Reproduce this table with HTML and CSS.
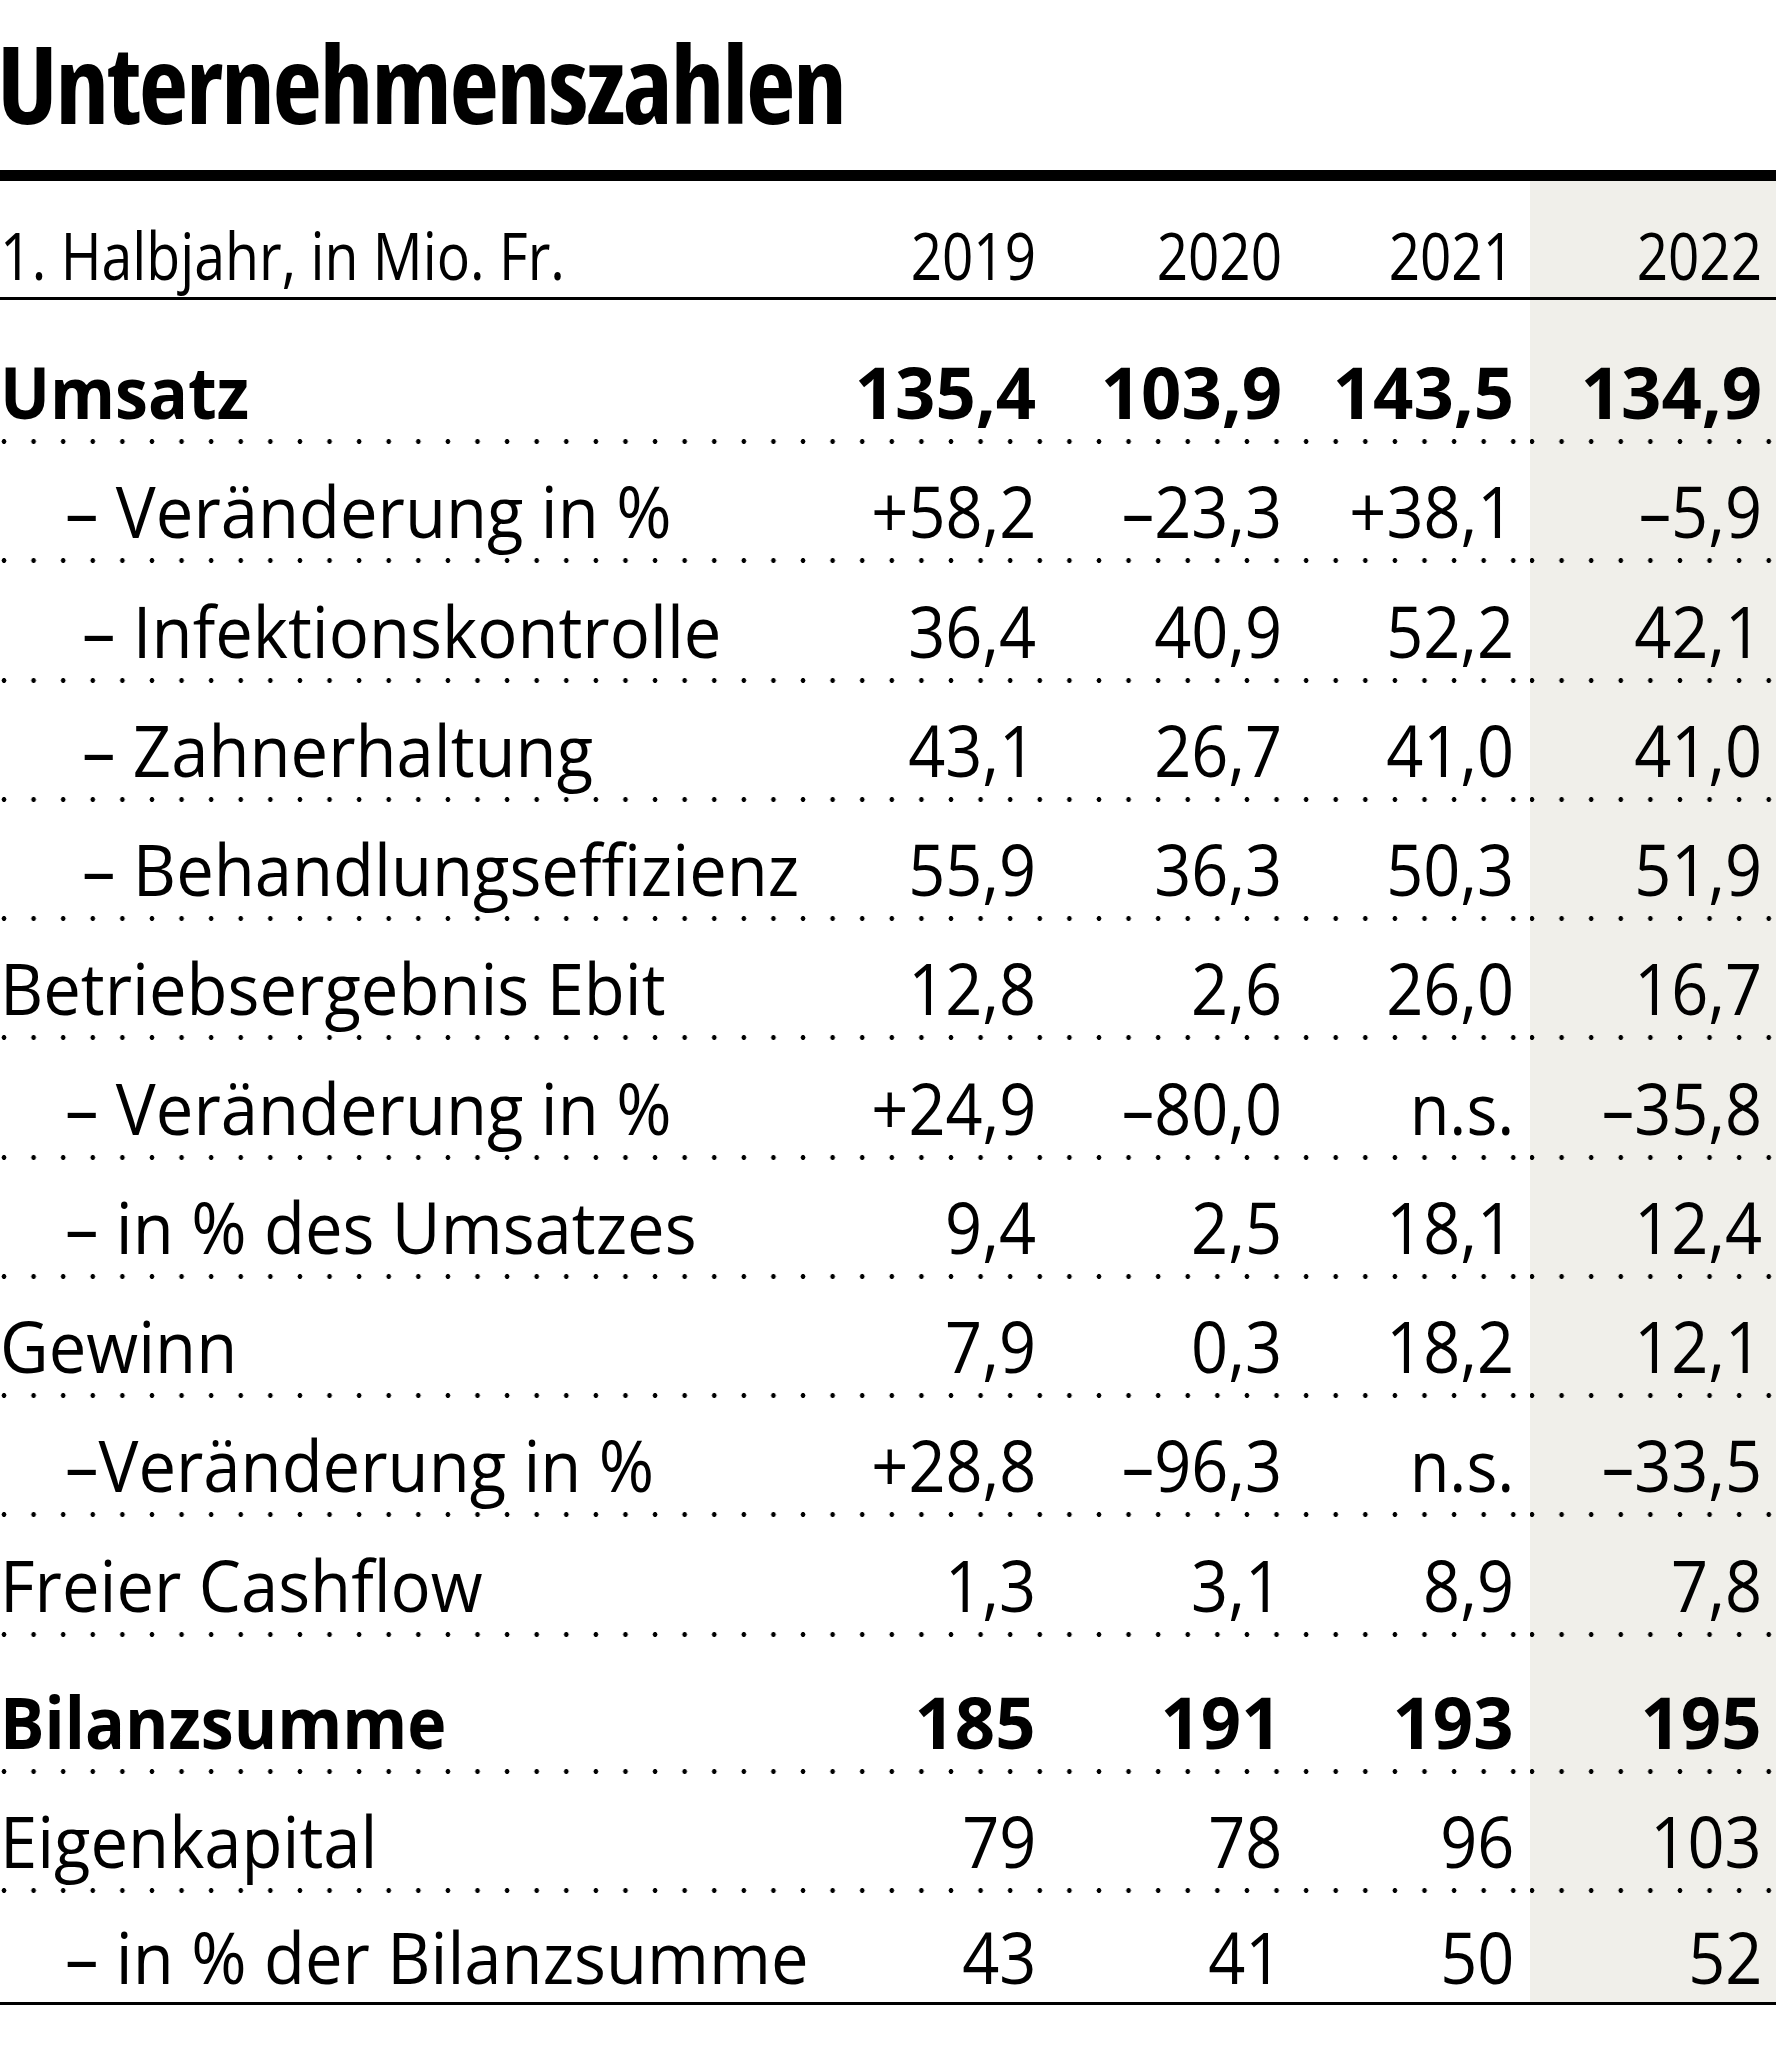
FILE: index.html
```html
<!DOCTYPE html>
<html lang="de">
<head>
<meta charset="utf-8">
<title>Unternehmenszahlen</title>
<link rel="stylesheet" href="styles.css">
</head>
<body>
<div class="sheet">
  <h1 class="title">Unternehmenszahlen</h1>
  <div class="table">
    <div class="row head">
      <div class="label"><span class="tx">1. Halbjahr, in Mio. Fr.</span></div>
      <div class="num"><span class="tx">2019</span></div>
      <div class="num"><span class="tx">2020</span></div>
      <div class="num c3"><span class="tx">2021</span></div>
      <div class="num hl"><span class="tx">2022</span></div>
    </div>
    <div class="row dots first bold">
      <div class="label"><span class="tx">Umsatz</span></div>
      <div class="num"><span class="tx">135,4</span></div>
      <div class="num"><span class="tx">103,9</span></div>
      <div class="num c3"><span class="tx">143,5</span></div>
      <div class="num hl"><span class="tx">134,9</span></div>
    </div>
    <div class="row dots">
      <div class="label ind1"><span class="tx">– Veränderung in %</span></div>
      <div class="num"><span class="tx">+58,2</span></div>
      <div class="num"><span class="tx">–23,3</span></div>
      <div class="num c3"><span class="tx">+38,1</span></div>
      <div class="num hl"><span class="tx">–5,9</span></div>
    </div>
    <div class="row dots">
      <div class="label ind2"><span class="tx">– Infektionskontrolle</span></div>
      <div class="num"><span class="tx">36,4</span></div>
      <div class="num"><span class="tx">40,9</span></div>
      <div class="num c3"><span class="tx">52,2</span></div>
      <div class="num hl"><span class="tx">42,1</span></div>
    </div>
    <div class="row dots">
      <div class="label ind2"><span class="tx">– Zahnerhaltung</span></div>
      <div class="num"><span class="tx">43,1</span></div>
      <div class="num"><span class="tx">26,7</span></div>
      <div class="num c3"><span class="tx">41,0</span></div>
      <div class="num hl"><span class="tx">41,0</span></div>
    </div>
    <div class="row dots">
      <div class="label ind2"><span class="tx">– Behandlungseffizienz</span></div>
      <div class="num"><span class="tx">55,9</span></div>
      <div class="num"><span class="tx">36,3</span></div>
      <div class="num c3"><span class="tx">50,3</span></div>
      <div class="num hl"><span class="tx">51,9</span></div>
    </div>
    <div class="row dots">
      <div class="label"><span class="tx">Betriebsergebnis Ebit</span></div>
      <div class="num"><span class="tx">12,8</span></div>
      <div class="num"><span class="tx">2,6</span></div>
      <div class="num c3"><span class="tx">26,0</span></div>
      <div class="num hl"><span class="tx">16,7</span></div>
    </div>
    <div class="row dots">
      <div class="label ind1"><span class="tx">– Veränderung in %</span></div>
      <div class="num"><span class="tx">+24,9</span></div>
      <div class="num"><span class="tx">–80,0</span></div>
      <div class="num c3"><span class="tx">n.s.</span></div>
      <div class="num hl"><span class="tx">–35,8</span></div>
    </div>
    <div class="row dots">
      <div class="label ind1"><span class="tx">– in % des Umsatzes</span></div>
      <div class="num"><span class="tx">9,4</span></div>
      <div class="num"><span class="tx">2,5</span></div>
      <div class="num c3"><span class="tx">18,1</span></div>
      <div class="num hl"><span class="tx">12,4</span></div>
    </div>
    <div class="row dots">
      <div class="label"><span class="tx">Gewinn</span></div>
      <div class="num"><span class="tx">7,9</span></div>
      <div class="num"><span class="tx">0,3</span></div>
      <div class="num c3"><span class="tx">18,2</span></div>
      <div class="num hl"><span class="tx">12,1</span></div>
    </div>
    <div class="row dots">
      <div class="label ind1"><span class="tx">–Veränderung in %</span></div>
      <div class="num"><span class="tx">+28,8</span></div>
      <div class="num"><span class="tx">–96,3</span></div>
      <div class="num c3"><span class="tx">n.s.</span></div>
      <div class="num hl"><span class="tx">–33,5</span></div>
    </div>
    <div class="row dots">
      <div class="label"><span class="tx">Freier Cashflow</span></div>
      <div class="num"><span class="tx">1,3</span></div>
      <div class="num"><span class="tx">3,1</span></div>
      <div class="num c3"><span class="tx">8,9</span></div>
      <div class="num hl"><span class="tx">7,8</span></div>
    </div>
    <div class="row dots tall bold">
      <div class="label"><span class="tx">Bilanzsumme</span></div>
      <div class="num"><span class="tx">185</span></div>
      <div class="num"><span class="tx">191</span></div>
      <div class="num c3"><span class="tx">193</span></div>
      <div class="num hl"><span class="tx">195</span></div>
    </div>
    <div class="row dots">
      <div class="label"><span class="tx">Eigenkapital</span></div>
      <div class="num"><span class="tx">79</span></div>
      <div class="num"><span class="tx">78</span></div>
      <div class="num c3"><span class="tx">96</span></div>
      <div class="num hl"><span class="tx">103</span></div>
    </div>
    <div class="row last">
      <div class="label ind1"><span class="tx">– in % der Bilanzsumme</span></div>
      <div class="num"><span class="tx">43</span></div>
      <div class="num"><span class="tx">41</span></div>
      <div class="num c3"><span class="tx">50</span></div>
      <div class="num hl"><span class="tx">52</span></div>
    </div>
  </div>
</div>
</body>
</html>
```
FILE: styles.css
```css
html, body {
  margin: 0;
  padding: 0;
  background: #ffffff;
}

.sheet {
  width: 1776px;
  color: #000;
  font-family: "Open Sans", "Noto Sans", sans-serif;
}

.title {
  margin: 0;
  box-sizing: border-box;
  height: 170px;
  padding-top: 8px;
  font-size: 108px;
  line-height: 150px;
  font-weight: 700;
  font-stretch: 75%;
  letter-spacing: -2.4px;
  white-space: nowrap;
  text-indent: -3px;
}

.table {
  display: flex;
  flex-direction: column;
}

.row {
  display: grid;
  grid-template-columns: minmax(0, 1fr) 246px 246px 248px 246px;
  align-items: end;
  box-sizing: border-box;
  height: 119.25px;
  font-size: 72px;
  font-stretch: 100%;
  line-height: 106px;
  white-space: nowrap;
}

.row > div {
  height: 100%;
  display: flex;
  align-items: flex-end;
  box-sizing: border-box;
}

.tx {
  display: inline-block;
}

.label {
  justify-content: flex-start;
}

.label .tx {
  transform: scaleX(0.93);
  transform-origin: 0 100%;
}

.num {
  justify-content: flex-end;
}

.num .tx {
  transform: scaleX(0.9);
  transform-origin: 100% 100%;
}

.c3 {
  padding-right: 16px;
}

.hl {
  padding-right: 14px;
  background-color: #f0efea;
}

.ind1 {
  padding-left: 65px;
}

.ind2 {
  padding-left: 82px;
}

.bold {
  font-weight: 700;
}

.bold .label .tx {
  transform: scaleX(0.92);
}

.bold .num .tx {
  transform: scaleX(0.98);
}

.dots {
  background-image: radial-gradient(circle, #000 0, #000 2.1px, rgba(0,0,0,0) 2.7px);
  background-size: 29.6px 5px;
  background-repeat: repeat-x;
  background-position: -10.8px 100%;
}

.dots .hl {
  background-image: radial-gradient(circle, #000 0, #000 2.1px, rgba(0,0,0,0) 2.7px);
  background-size: 29.6px 5px;
  background-repeat: repeat-x;
  background-position: -12.8px 100%;
}

.head {
  height: 130px;
  border-top: 11px solid #000;
  border-bottom: 3px solid #000;
  font-size: 66px;
  line-height: 85px;
}

.head .label .tx {
  transform: scaleX(0.84);
}

.head .num .tx {
  transform: scaleX(0.83);
}

.first {
  height: 144px;
}

.tall {
  height: 137px;
}

.last {
  height: 112.5px;
  border-bottom: 3px solid #000;
  line-height: 91px;
}
```
